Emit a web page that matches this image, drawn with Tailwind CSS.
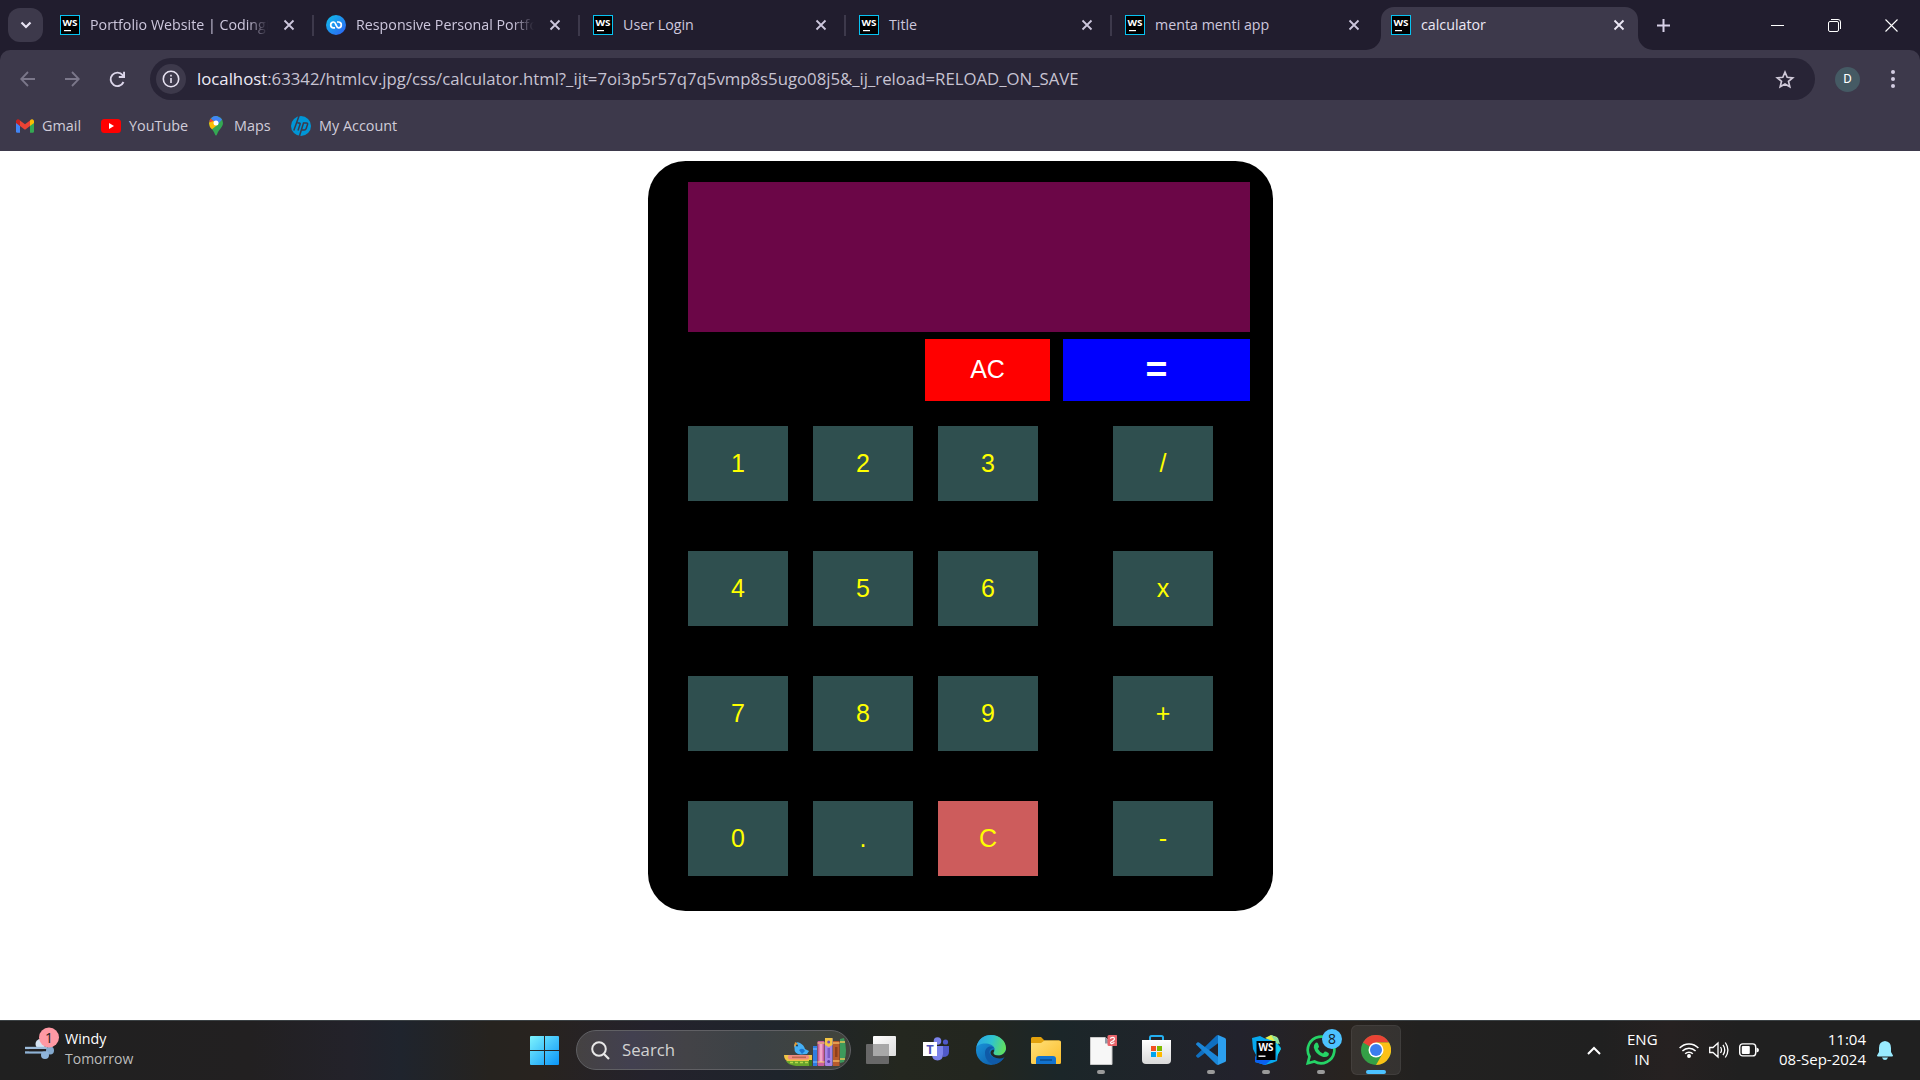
<!DOCTYPE html>
<html lang="en">
<head>
<meta charset="utf-8">
<title>calculator</title>
<script src="https://cdn.jsdelivr.net/npm/@tailwindcss/browser@4"></script>
</head>
<body class="w-[1920px] h-[1080px] overflow-hidden bg-white flex flex-col font-['Open_Sans','Noto_Sans',sans-serif]">

<svg width="0" height="0" class="absolute">
  <defs>
    <symbol id="ws" viewBox="0 0 20 20">
      <rect width="20" height="20" fill="#07c3f2"/><rect x="1" y="1" width="18" height="18" fill="#000"/>
      <text x="10" y="11" font-family="Open Sans, sans-serif" font-weight="700" font-size="9.5" fill="#fff" text-anchor="middle" textLength="15" lengthAdjust="spacingAndGlyphs">WS</text>
      <rect x="4" y="15" width="7" height="1.2" fill="#fff"/>
    </symbol>
    <symbol id="x" viewBox="0 0 12 12"><path d="M1.5 1.5 10.5 10.5M10.5 1.5 1.5 10.5" stroke="currentColor" stroke-width="1.8" fill="none"/></symbol>
    <linearGradient id="win" x1="0" y1="0" x2="1" y2="1"><stop offset="0" stop-color="#7df3fd"/><stop offset="1" stop-color="#0a95f8"/></linearGradient>
    <linearGradient id="cn" x1="0" y1="0" x2="1" y2="1"><stop offset="0" stop-color="#0fc0e8"/><stop offset="1" stop-color="#2f5ff5"/></linearGradient>
    <linearGradient id="edgeTop" x1="0" y1=".3" x2="1" y2=".5"><stop offset="0" stop-color="#2aa6e6"/><stop offset=".5" stop-color="#2fc3cf"/><stop offset="1" stop-color="#62e05b"/></linearGradient>
    <linearGradient id="edgeLow" x1="0" y1="0" x2="1" y2="1"><stop offset="0" stop-color="#1b9de2"/><stop offset="1" stop-color="#0b4f9e"/></linearGradient>
    <linearGradient id="fold" x1="0" y1="0" x2="1" y2="1"><stop offset="0" stop-color="#ffe07a"/><stop offset="1" stop-color="#fbbd2a"/></linearGradient>
    <linearGradient id="store" x1="0" y1="0" x2="0" y2="1"><stop offset="0" stop-color="#fff"/><stop offset="1" stop-color="#d9d9d9"/></linearGradient>
    <linearGradient id="tv" x1="0" y1="0" x2="1" y2="1"><stop offset="0" stop-color="#fff"/><stop offset="1" stop-color="#dcdcdc"/></linearGradient>
  </defs>
</svg>

<!-- Tab strip -->
<header class="h-[50px] shrink-0 bg-[#211d2e] flex items-center pl-2 text-[#cdc7dd] text-[14.25px]">
  <button class="w-[35px] h-[34px] rounded-xl bg-[#3d394b] flex items-center justify-center mr-[5px]">
    <svg width="12" height="8" viewBox="0 0 12 8"><path d="M1.5 1.5 6 6 10.5 1.5" stroke="#e8e3f3" stroke-width="2.2" fill="none"/></svg>
  </button>
  <nav class="flex h-full items-center">
    <div class="w-[266px] h-[21px] border-r-2 border-[#3d394b] flex items-center pl-3 pr-[17px]">
      <svg class="size-5 mr-[10px] shrink-0"><use href="#ws"/></svg>
      <span class="flex-1 overflow-hidden whitespace-nowrap mr-[15px] h-6 leading-6 [mask-image:linear-gradient(90deg,#000_88%,transparent)]">Portfolio Website | CodingN</span>
      <svg class="size-3 shrink-0"><use href="#x"/></svg>
    </div>
    <div class="w-[266px] h-[21px] border-r-2 border-[#3d394b] flex items-center pl-3 pr-[17px]">
      <svg class="size-5 mr-[10px] shrink-0" viewBox="0 0 20 20"><circle cx="10" cy="10" r="10" fill="url(#cn)"/><path d="M9 12.8H7.600A2.900 2.900 0 0 1 7.600 7C10.200 7 9.800 12.800 12.400 12.800A2.900 2.900 0 0 0 12.400 7H11" fill="none" stroke="#fff" stroke-width="1.700"/></svg>
      <span class="flex-1 overflow-hidden whitespace-nowrap mr-[15px] h-6 leading-6 [mask-image:linear-gradient(90deg,#000_88%,transparent)]">Responsive Personal Portfo</span>
      <svg class="size-3 shrink-0"><use href="#x"/></svg>
    </div>
    <div class="w-[266px] h-[21px] border-r-2 border-[#3d394b] flex items-center pl-[13px] pr-[17px]">
      <svg class="size-5 mr-[10px] shrink-0"><use href="#ws"/></svg>
      <span class="flex-1 whitespace-nowrap h-6 leading-6">User Login</span>
      <svg class="size-3 shrink-0"><use href="#x"/></svg>
    </div>
    <div class="w-[266px] h-[21px] border-r-2 border-[#3d394b] flex items-center pl-[13px] pr-[17px]">
      <svg class="size-5 mr-[10px] shrink-0"><use href="#ws"/></svg>
      <span class="flex-1 whitespace-nowrap h-6 leading-6">Title</span>
      <svg class="size-3 shrink-0"><use href="#x"/></svg>
    </div>
    <div class="w-[267px] h-[21px] flex items-center pl-[13px] pr-[19px]">
      <svg class="size-5 mr-[10px] shrink-0"><use href="#ws"/></svg>
      <span class="flex-1 whitespace-nowrap h-6 leading-6">menta menti app</span>
      <svg class="size-3 shrink-0"><use href="#x"/></svg>
    </div>
    <div class="relative w-[259px] h-full flex items-center pl-3 pr-[13px] text-[#ece8f5]">
      <svg class="absolute left-[-13px] top-0" width="287" height="50"><path d="M0 50 A15 15 0 0 0 15 35 V20 A13 13 0 0 1 28 7 H259 A13 13 0 0 1 272 20 V35 A15 15 0 0 0 287 50Z" fill="#3d394b"/></svg>
      <svg class="relative size-5 mr-[10px] shrink-0"><use href="#ws"/></svg>
      <span class="relative flex-1 whitespace-nowrap h-6 leading-6">calculator</span>
      <svg class="relative size-3 shrink-0"><use href="#x"/></svg>
    </div>
  </nav>
  <svg class="ml-[19px]" width="13" height="13"><path d="M6.5 0V13M0 6.5H13" stroke="#d8d1e8" stroke-width="2"/></svg>
  <div class="ml-auto mr-[22px] flex items-center gap-[44px]">
    <svg width="13" height="13"><path d="M0 6.500H13" stroke="#fff" stroke-width="1"/></svg>
    <svg width="13" height="13" fill="none" stroke="#fff"><rect x=".5" y="2.500" width="10" height="10" rx="1.500"/><path d="M3 .5H10A2.500 2.500 0 0 1 12.500 3V10"/></svg>
    <svg width="13" height="13"><path d="M.5.5 12.500 12.500M12.500.5.5 12.500" stroke="#fff" stroke-width="1.100"/></svg>
  </div>
</header>

<!-- Toolbar and bookmarks -->
<div class="h-[101px] shrink-0 bg-[#211d2e]">
  <div class="h-full rounded-t-[10px] bg-[#3d394b] pt-2">
    <div class="h-[42px] flex items-center pl-[20px]">
      <svg width="15" height="16" viewBox="0 0 15 16" fill="none" stroke="#7b778a" stroke-width="1.800"><path d="M15 8H1.500M8 1 1.200 8 8 15"/></svg>
      <svg class="ml-[30px]" width="15" height="16" viewBox="0 0 15 16" fill="none" stroke="#7b778a" stroke-width="1.800"><path d="M0 8H13.500M7 1 13.800 8 7 15"/></svg>
      <svg class="ml-[29px]" width="17" height="17" viewBox="0 0 17 17"><path d="M14.500 11A6.700 6.700 0 1 1 13.600 4.200L15.500 6" fill="none" stroke="#dcd6ea" stroke-width="1.900"/><path d="M16 .8V7H9.800V5.100H14.100V.8Z" fill="#dcd6ea"/></svg>
      <div class="ml-[24px] w-[1665px] h-[42px] rounded-full bg-[#282436] flex items-center pl-[6px] pr-[20px]">
        <span class="size-[30px] rounded-full bg-[#3d394b] flex items-center justify-center">
          <svg width="18" height="18" viewBox="0 0 18 18"><circle cx="9" cy="9" r="7.700" fill="none" stroke="#e6e1f0" stroke-width="1.600"/><path d="M9 8V13M9 4.700V6.400" stroke="#e6e1f0" stroke-width="1.600"/></svg>
        </span>
        <span class="ml-[11px] flex-1 whitespace-nowrap text-[16.75px] text-[#c7c3d2]"><span class="text-[#eeeaf7]">localhost</span>:63342/htmlcv.jpg/css/calculator.html?_ijt=7oi3p5r57q7q5vmp8s5ugo08j5&amp;_ij_reload=RELOAD_ON_SAVE</span>
        <svg width="20" height="19" viewBox="0 0 20 19"><path d="M10 2.200 12.200 7.300 17.700 7.800 13.500 11.400 14.800 16.800 10 13.900 5.200 16.800 6.500 11.400 2.300 7.800 7.800 7.300Z" fill="none" stroke="#cfc9d8" stroke-width="1.700"/></svg>
      </div>
      <span class="ml-[20px] size-[25px] rounded-full bg-[#455a64] text-white text-[13px] font-['Roboto',sans-serif] flex items-center justify-center">D</span>
      <svg class="ml-[31px]" width="4" height="20" fill="#d3cde2"><circle cx="2" cy="3" r="2"/><circle cx="2" cy="10" r="2"/><circle cx="2" cy="17" r="2"/></svg>
    </div>
    <div class="h-[51px] flex items-center pl-4 text-[14.4px] text-[#d0ccd9] whitespace-nowrap">
      <svg width="18" height="14" viewBox="0 0 18 14"><path d="M0 2.500V12.500A1.200 1.200 0 0 0 1.200 13.700H4V6.500Z" fill="#4285f4"/><path d="M18 2.500V12.500A1.200 1.200 0 0 1 16.800 13.700H14V6.500Z" fill="#34a853"/><path d="M14 1.500V7L18 4V2A1.900 1.900 0 0 0 15 .6Z" fill="#fbbc04"/><path d="M4 1.500V7L9 10.700 14 7V1.500L9 5.200Z" fill="#ea4335"/><path d="M4 1.300V7L0 4V2A1.900 1.900 0 0 1 3 .6Z" fill="#c5221f"/></svg>
      <span class="ml-2 w-[59px]">Gmail</span>
      <svg width="20" height="14" viewBox="0 0 20 14"><rect width="20" height="14" rx="3.500" fill="#f00"/><path d="M8 4V10L13 7Z" fill="#fff"/></svg>
      <span class="ml-2 w-[80px]">YouTube</span>
      <svg width="14" height="20" viewBox="0 0 14 20"><path d="M7 0A7 7 0 0 0 0 7C0 11 4 13 5.800 18Q7 21 8.200 18C10 13 14 11 14 7A7 7 0 0 0 7 0Z" fill="#34a853"/><path d="M4 1.200A7 7 0 0 1 13 3.500L9 8 5 5Z" fill="#4285f4"/><path d="M1.600 2.500A7 7 0 0 0 .3 6L3 8 6 5.800Z" fill="#ea4335"/><path d="M2 2.300A7 7 0 0 1 9 .3L5 5.500Z" fill="#4285f4"/><path d="M.1 6.500A8 8 0 0 0 3 13.300L9.200 8.200 4.800 5Z" fill="#fbbc04"/><circle cx="7" cy="7" r="2.500" fill="#fff"/></svg>
      <span class="ml-[11px] w-[57px]">Maps</span>
      <svg width="20" height="20" viewBox="0 0 20 20"><circle cx="10" cy="10" r="10" fill="#0096d6"/><path d="M8 0 2.800 14.500M6.500 7H8.200Q9.500 7 9 8.500L7 14.500M14.200 7H12.500L8.500 20M14.200 7H15.500Q17 7 16.500 8.500L15.200 12.500Q14.700 14 13.200 14H11" fill="none" stroke="#3d394b" stroke-width="1.500"/></svg>
      <span class="ml-2">My Account</span>
    </div>
  </div>
</div>

<!-- Page -->
<main class="flex-1 pt-[10px] pl-[648px]">
  <section class="w-[625px] h-[750px] rounded-[37.5px] bg-black pt-[21px] pl-10 font-['Liberation_Sans',Arial,sans-serif] text-[25px] text-[#ff0]">
    <div class="w-[562px] h-[150px] bg-[#6b0647]"></div>
    <div class="mt-[7px] w-[562px] h-[62px] flex justify-end gap-[13px] text-white">
      <button class="w-[125px] bg-[#f00]">AC</button>
      <button class="w-[187px] bg-[#00f] font-bold text-[37.5px] leading-none">=</button>
    </div>
    <div class="mt-[25px] grid grid-cols-[100px_100px_100px_150px] auto-rows-[75px] gap-x-[25px] gap-y-[50px]">
      <button class="bg-[#2f4f4f]">1</button><button class="bg-[#2f4f4f]">2</button><button class="bg-[#2f4f4f]">3</button><button class="bg-[#2f4f4f] ml-[50px]">/</button>
      <button class="bg-[#2f4f4f]">4</button><button class="bg-[#2f4f4f]">5</button><button class="bg-[#2f4f4f]">6</button><button class="bg-[#2f4f4f] ml-[50px]">x</button>
      <button class="bg-[#2f4f4f]">7</button><button class="bg-[#2f4f4f]">8</button><button class="bg-[#2f4f4f]">9</button><button class="bg-[#2f4f4f] ml-[50px]">+</button>
      <button class="bg-[#2f4f4f]">0</button><button class="bg-[#2f4f4f]">.</button><button class="bg-[#cd5c5c]">C</button><button class="bg-[#2f4f4f] ml-[50px]">-</button>
    </div>
  </section>
</main>

<!-- Taskbar -->
<footer class="h-[60px] shrink-0 shadow-[inset_0_1px_0_#3b4144] flex items-center text-white text-[14.25px] leading-5 bg-[linear-gradient(90deg,#202020_0,#222021_250px,#23222a_350px,#1f242d_400px,#26231f_490px,#28231f_540px,#24222c_650px,#1e242b_780px,#24271f_900px,#23261f_980px,#1b2629_1060px,#20242a_1160px,#22222c_1240px,#28231f_1350px,#222120_1420px,#202020_1600px,#262121_1670px,#202020_1740px)]">
  <div class="w-[530px] flex items-center pl-[25px]">
    <svg class="-mt-[13px]" width="35" height="33" viewBox="0 0 35 33"><circle cx="15.500" cy="17" r="5" fill="#d5e3f2"/><rect x="0" y="19.800" width="22" height="2.300" fill="#9dbcda"/><rect x="0" y="24.300" width="24" height="2.300" fill="#8fb2d4"/><circle cx="25" cy="23.500" r="4" fill="#84a9ce"/><circle cx="20" cy="28" r="4" fill="#8fb4da"/><path d="M4 23.200H21" stroke="#222021" stroke-width="2"/><circle cx="24" cy="10.500" r="10" fill="#ff99a4"/><text x="24" y="15.500" font-size="14" fill="#1c1c1c" text-anchor="middle">1</text></svg>
    <div class="ml-[5px] -mt-[3px] whitespace-nowrap"><div>Windy</div><div class="text-[#bcbcbc] text-[14px]">Tomorrow</div></div>
  </div>
  <svg width="29" height="29" viewBox="0 0 29 29" fill="url(#win)"><path d="M1 0H14V14H0V1A1 1 0 0 1 1 0ZM15 0H28A1 1 0 0 1 29 1V14H15ZM0 15H14V29H1A1 1 0 0 1 0 28ZM15 15H29V28A1 1 0 0 1 28 29H15Z"/></svg>
  <div class="ml-[17px] w-[275px] h-10 rounded-full border border-[#606064] bg-[linear-gradient(90deg,#454242,#424050_20%,#434347_40%,#3c4246_65%,#41443c)] flex items-center pl-[14px] pr-[3px]">
    <svg width="19" height="19" viewBox="0 0 19 19" fill="none" stroke="#e8e8e8"><circle cx="8" cy="8" r="6.800" stroke-width="2"/><path d="M13 13 18 18" stroke-width="2.200"/></svg>
    <span class="ml-[12px] flex-1 text-[16.75px] text-[#d2d2d2]">Search</span>
    <svg class="mt-[3px]" width="63" height="30" viewBox="0 0 63 30">
      <path d="M0 18H28V24H3Q0 22 0 18Z" fill="#f0c445"/><rect x="4" y="18" width="21" height="4.500" rx="2" fill="#ef8a80"/><rect x="8" y="19.500" width="14" height="1.600" fill="#b96a50"/><path d="M2 24H28V29H12Q4 28 2 24Z" fill="#67a52c"/><path d="M6 25.500H26" stroke="#b8d84a" stroke-width="1.500" stroke-dasharray="3 2"/><rect x="25" y="23" width="3" height="6" fill="#3c7a1d"/>
      <path d="M10 8Q12 4 16 6Q20 8 21 12L25 14 23 17 17 17.500Q10 17 10.500 11Z" fill="#45b0f5"/><path d="M15 13Q19 10 21 14L18 17Z" fill="#1976d2"/><path d="M11 5 10 10 14 7Z" fill="#e99a2c"/><circle cx="13" cy="8.500" r=".9" fill="#12324f"/>
      <rect x="29" y="9" width="4" height="20" fill="#2f7de0"/><path d="M29 12H33M29 25H33" stroke="#8cc4ff"/>
      <rect x="33.500" y="4" width="7" height="25" rx="1" fill="#c95f9c"/><rect x="35.500" y="7" width="3" height="18" fill="#f0a3c8"/><path d="M33.500 6H40.500M33.500 25H40.500" stroke="#f6d46b" stroke-width="1"/>
      <rect x="41" y="1" width="7.500" height="28" rx="1" fill="#a684e6"/><path d="M41 1H48.500V8L44.700 10 41 8Z" fill="#f3c544"/><circle cx="44.700" cy="5" r="1.500" fill="#7a4fb8"/><rect x="43.500" y="11" width="2.500" height="10" fill="#7d5bc4"/><circle cx="44.700" cy="24.500" r="1.500" fill="#5b3da0"/>
      <rect x="49" y="4" width="6.500" height="25" fill="#b85b2c"/><path d="M49 6H55.500M49 24H55.500" stroke="#f0b35c" stroke-width="1.500"/><rect x="51" y="10" width="2.500" height="10" fill="#8f3f1c"/>
      <path d="M56 2 60 1Q64 14 60 25L56 26Z" fill="#3d9a5b"/><path d="M56 5H61M56 22H61" stroke="#e9c556" stroke-width="1.300"/>
    </svg>
  </div>
  <div class="ml-[5px] flex items-center h-full gap-[5px]">
    <div class="w-[50px] flex justify-center"><svg width="30" height="28" viewBox="0 0 30 28"><rect x="7" y="0" width="23" height="20" rx="1" fill="url(#tv)"/><rect x="0" y="8" width="23" height="20" rx="1" fill="#686868"/><rect x="7" y="8" width="16" height="12" fill="#a8a8a8"/></svg></div>
    <div class="w-[50px] flex justify-center"><svg class="-mt-[2px]" width="26" height="24" viewBox="0 0 26 24"><circle cx="14.500" cy="4" r="3.800" fill="#7b83eb"/><circle cx="22.500" cy="5" r="2.600" fill="#5059c9"/><path d="M18 9H26V15Q26 20 20 20Z" fill="#5059c9"/><path d="M9 9H20V17Q20 23.500 14.500 23.500 9 23.500 9 17Z" fill="#7b83eb"/><rect y="5" width="14" height="14" fill="#fff"/><text x="7" y="16.500" font-size="13" font-weight="700" fill="#4b53bc" text-anchor="middle">T</text></svg></div>
    <div class="w-[50px] flex justify-center"><svg width="30" height="30" viewBox="0 0 30 30"><circle cx="15" cy="15" r="15" fill="url(#edgeLow)"/><path d="M.3 12.500C2 4 8 0 15 0 23.500 0 30 6 30 13 30 18 26 20.500 22 20.500 18.500 20.500 17 19 17.300 17.700 18 16.500 19 16 18.500 13.500 17.500 9.500 12 8 7.500 8.500 4 9 1 10.500.3 12.500Z" fill="url(#edgeTop)"/><path d="M18.500 13.500C15 9.500 9 12 9 18 9 25 14 29.500 19 29.300 23 28 26.500 25.500 28.500 22 24 24.500 15 24 13.500 18 13 15 15.500 12.500 18.500 13.500Z" fill="#0f5aa8"/><path d="M17.500 17.300C17 18.800 18.500 20.500 22 20.500 26 20.500 29 18.500 29.800 15L30 20 28.500 22.200C23 25 15.500 22.500 14.500 18Q14.500 15 17.500 14.500Q19 16 17.500 17.300Z" fill="#222623"/></svg></div>
    <div class="w-[50px] flex justify-center"><svg width="30" height="27" viewBox="0 0 30 27"><path d="M0 1.500Q0 0 1.500 0H10L13.500 3.500H28V9H0Z" fill="#e2a10d"/><path d="M0 6H10L13.500 3.500H28.500Q30 3.500 30 5V25.500Q30 27 28.500 27H1.500Q0 27 0 25.500Z" fill="url(#fold)"/><path d="M5 27V22Q5 19 8 19H22Q25 19 25 22V27Z" fill="#1273cf"/><path d="M9 23H21" stroke="#0a4a8c" stroke-width="1.500"/></svg></div>
    <div class="relative w-[50px] flex justify-center"><svg width="32" height="32" viewBox="0 0 32 32"><path d="M5.500 3.500H20L27 9.500V30.500H5.500Z" fill="#f7f7f7" stroke="#c9c9c9"/><path d="M20 3.500V9.500H27Z" fill="#8e9aa6"/><rect x="22.500" y="1" width="10" height="11" rx="1.500" fill="#e8646a"/><path d="M25 4.500Q29 2 29.500 5 29 7 26.500 7.500 24.500 9 26.500 9.800L29.500 8.500" fill="none" stroke="#fff" stroke-width="1.200"/></svg><i class="absolute bottom-[-8px] left-[21px] w-2 h-1 rounded-full bg-[#9a9a9a]"></i></div>
    <div class="w-[50px] flex justify-center"><svg width="29" height="30" viewBox="0 0 29 30"><path d="M8 6V2.500Q8 1 9.500 1H19.500Q21 1 21 2.500V6" fill="none" stroke="#24b0f0" stroke-width="2"/><path d="M0 5H29V25Q29 29 25 29H4Q0 29 0 25Z" fill="url(#store)"/><rect x="9" y="11" width="5" height="5" fill="#f25022"/><rect x="15" y="11" width="5" height="5" fill="#7fba00"/><rect x="9" y="17" width="5" height="5" fill="#00a4ef"/><rect x="15" y="17" width="5" height="5" fill="#ffb900"/></svg></div>
    <div class="relative w-[50px] flex justify-center"><svg width="30" height="30" viewBox="0 0 30 30"><path d="M22 0 29 3Q30 3.500 30 4.500V25.500Q30 26.500 29 27L22 30Z" fill="#2c9fee"/><path d="M22 8.200 3 22.500Q2 23.200 1.200 22.500L.3 21.500Q-.3 20.800.3 20.200L20 1Q21 0 22 0Z" fill="#0f6fc0"/><path d="M22 21.800 3 7.500Q2 6.800 1.200 7.500L.3 8.500Q-.3 9.200.3 9.800L20 29Q21 30 22 30Z" fill="#1b86d8"/></svg><i class="absolute bottom-[-9px] left-[21px] w-2 h-1 rounded-full bg-[#9a9a9a]"></i></div>
    <div class="relative w-[50px] flex justify-center"><svg width="30" height="30" viewBox="0 0 30 30"><path d="M1 3 9 1 15 4 20 0 27 3 27 9 30 13 27 19 26 26 21 28 14 30 4 27 5 20 2 14Z" fill="#07a8ee"/><path d="M14 3 20 0 26 2 27 9 22 6Z" fill="#e6f14c"/><path d="M20 0 27 3 29 9 25 8Z" fill="#8be0a0"/><path d="M4 20 6 25 20 25 14 30 4 27Z" fill="#0a5ff0"/><path d="M25 8 30 14 26 21Z" fill="#12cdea"/><rect x="5.500" y="6" width="19" height="19" fill="#000"/><text x="15" y="15.500" font-size="10" font-weight="700" fill="#fff" text-anchor="middle" textLength="15" lengthAdjust="spacingAndGlyphs">WS</text><rect x="7.500" y="20.500" width="7" height="1.400" fill="#fff"/></svg><i class="absolute bottom-[-9px] left-[21px] w-2 h-1 rounded-full bg-[#9a9a9a]"></i></div>
    <div class="relative w-[50px] flex justify-center"><svg width="30" height="30" viewBox="0 0 30 30"><path d="M1.800 28.200 3.500 21.500A13.300 13.300 0 1 1 8.500 26.500Z" fill="none" stroke="#25d366" stroke-width="2.700"/><path d="M9.500 8Q11 7 12 8.500L13 11.500Q13 12.500 11.800 13.800 13.500 17 17 18.500L18.800 16.600Q19.500 16.200 22.500 18 23.500 18.800 22.300 20.800 19.800 23 16 21.500 9.500 19 7.800 12.500 7.500 9.500 9.500 8Z" fill="#25d366"/></svg><span class="absolute left-[26px] top-[-6px] size-5 rounded-full bg-[#4cc2ff] text-[#14202a] text-[14px] leading-5 text-center">8</span><i class="absolute bottom-[-9px] left-[21px] w-2 h-1 rounded-full bg-[#9a9a9a]"></i></div>
    <div class="relative w-[50px] h-[50px] rounded-md bg-white/8 border border-white/6 flex items-center justify-center"><svg width="30" height="30" viewBox="0 0 30 30"><circle cx="15" cy="15" r="15" fill="#34a046"/><path d="M15 15 2 7.500A15 15 0 0 1 28 7.500H15Z" fill="#ea4335"/><path d="M28 7.500A15 15 0 0 1 15 30L21.500 18.700 15 7.500Z" fill="#fbc116"/><circle cx="15" cy="15" r="7.500" fill="#fff"/><circle cx="15" cy="15" r="6" fill="#3b7ded"/></svg><i class="absolute bottom-0 left-[14px] w-5 h-1 rounded-full bg-[#4cc2ff]"></i></div>
  </div>
  <div class="ml-auto flex items-center pr-[27px] whitespace-nowrap text-[15px]">
    <svg width="14" height="9" viewBox="0 0 14 9"><path d="M1 8 7 2 13 8" fill="none" stroke="#fff" stroke-width="2"/></svg>
    <div class="ml-[26px] -mt-[2px] w-[30px] text-center"><div>ENG</div><div>IN</div></div>
    <svg class="ml-[22px]" width="20" height="16" viewBox="0 0 20 16" fill="none" stroke="#fff" stroke-width="1.500"><path d="M.6 6A13 13 0 0 1 19.400 6M3.400 9A9.200 9.200 0 0 1 16.600 9M6.200 11.800A5.300 5.300 0 0 1 13.800 11.800"/><circle cx="10" cy="14" r="1.200" fill="#fff"/></svg>
    <svg class="ml-[10px]" width="20" height="18" viewBox="0 0 20 18" fill="none" stroke="#fff" stroke-width="1.300"><path d="M.7 6.500H4L9 2V16L4 11.500H.7ZM11.500 6Q13.500 9 11.500 12M14 3.800Q17.500 9 14 14.200M16.300 1.500Q21.500 9 16.300 16.500"/></svg>
    <svg class="ml-[10px]" width="20" height="14" viewBox="0 0 20 14"><rect x=".7" y=".9" width="16" height="12" rx="3" fill="none" stroke="#fff" stroke-width="1.400"/><rect x="2.800" y="3" width="8" height="8" rx="1" fill="#fff"/><path d="M17.500 4.500Q20 5 20 7 20 9 17.500 9.500Z" fill="#fff"/></svg>
    <div class="ml-[20px] -mt-[3px] w-[87px] flex flex-col items-end"><div>11:04</div><div>08-Sep-2024</div></div>
    <svg class="ml-[11px]" width="16" height="19" viewBox="0 0 16 19" fill="#99ebff"><path d="M8 0Q14 .5 14 7V11L16 14.500Q16 15.500 15 15.500H1Q0 15.500 0 14.500L2 11V7Q2 .5 8 0ZM5 16.500H11Q10 19 8 19 6 19 5 16.500Z"/></svg>
  </div>
</footer>
</body>
</html>
